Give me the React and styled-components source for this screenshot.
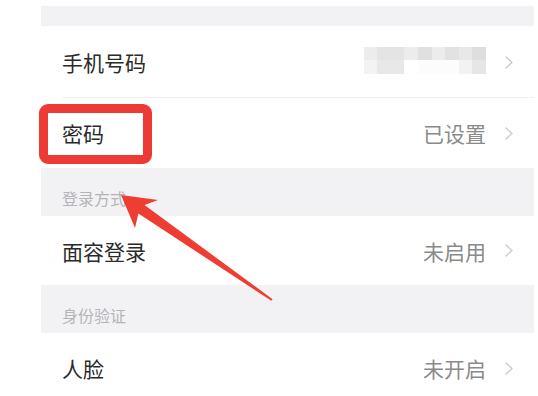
import React from "react";
import styled, { createGlobalStyle } from "styled-components";

const GlobalStyle = createGlobalStyle`
  html, body {
    margin: 0;
    padding: 0;
    background: #ffffff;
  }
  body {
    font-family: "Noto Sans CJK SC", "Noto Sans", sans-serif;
  }
`;

const Page = styled.div`
  position: relative;
  width: 538px;
  height: 396px;
  overflow: hidden;
  background: #ffffff;
  padding: 6px 4px 0 41px;
  box-sizing: border-box;
`;

const List = styled.div`
  display: flex;
  flex-direction: column;
`;

const TopBand = styled.div`
  height: 20px;
  background: #f2f2f5;
`;

const SectionHeader = styled.div`
  height: 48px;
  background: #f2f2f5;
  display: flex;
  align-items: flex-end;
  padding: 0 0 8px 21px;
  box-sizing: border-box;
  font-size: 16px;
  line-height: 20px;
  color: #b4b4b8;
`;

const Row = styled.div`
  position: relative;
  height: ${(p) => p.$h}px;
  display: flex;
  align-items: center;
  padding: 0 21px;
  box-sizing: border-box;
  background: #ffffff;

  ${(p) =>
    p.$divider &&
    `
    &::after {
      content: "";
      position: absolute;
      left: 21px;
      right: 0;
      bottom: 0;
      height: 1px;
      background: #f0f0f2;
    }
  `}
`;

const Label = styled.span`
  flex: 1;
  font-size: 21px;
  line-height: 28px;
  color: #2a2a2a;
`;

const Value = styled.span`
  font-size: 21px;
  line-height: 28px;
  color: #8a8a8a;
`;

const Chevron = styled.svg`
  width: 8px;
  height: 13px;
  margin-left: 19px;
  flex-shrink: 0;
`;

const Mosaic = styled.div`
  display: grid;
  grid-template-columns: repeat(9, 13.6px);
  grid-template-rows: repeat(2, 13.5px);
  margin-top: -4px;
`;

const Tile = styled.div`
  background: ${(p) => p.$c};
`;

const Highlight = styled.div`
  position: absolute;
  left: -2px;
  top: 6px;
  width: 113px;
  height: 60px;
  border: 9px solid #ee3a35;
  border-radius: 9px;
  box-sizing: border-box;
  pointer-events: none;
`;

const ArrowLayer = styled.svg`
  position: absolute;
  left: 0;
  top: 0;
  width: 538px;
  height: 396px;
  pointer-events: none;
`;

const mosaic = [
  "#ececec", "#e4e4e4", "#e4e4e4", "#ececec", "#e0e0e0", "#ececec", "#e2e2e2", "#e8e8e8", "#dedede",
  "#f3f3f3", "#e8e8e8", "#e8e8e8", "#ffffff", "#fcfcfc", "#fcfcfc", "#fcfcfc", "#f2f2f2", "#e6e6e6",
];

function Arrow() {
  return (
    <Chevron viewBox="0 0 8 13">
      <path
        d="M1 1 L7 6.5 L1 12"
        fill="none"
        stroke="#c9c9cc"
        strokeWidth="1.3"
        strokeLinecap="round"
        strokeLinejoin="round"
      />
    </Chevron>
  );
}

export default function App() {
  return (
    <>
      <GlobalStyle />
      <Page>
        <List>
          <TopBand />
          <Row $h={72} $divider>
            <Label>手机号码</Label>
            <Mosaic>
              {mosaic.map((c, i) => (
                <Tile key={i} $c={c} />
              ))}
            </Mosaic>
            <Arrow />
          </Row>
          <Row $h={70}>
            <Label>密码</Label>
            <Value>已设置</Value>
            <Arrow />
            <Highlight />
          </Row>
          <SectionHeader>登录方式</SectionHeader>
          <Row $h={69}>
            <Label>面容登录</Label>
            <Value>未启用</Value>
            <Arrow />
          </Row>
          <SectionHeader>身份验证</SectionHeader>
          <Row $h={70}>
            <Label>人脸</Label>
            <Value>未开启</Value>
            <Arrow />
          </Row>
        </List>
        <ArrowLayer viewBox="0 0 538 396">
          <polygon
            points="121,195 158,200 144.5,205 272.6,299.2 271.4,300.8 138.4,213.6 135,228"
            fill="#ee3d33"
            strokeLinejoin="round"
          />
        </ArrowLayer>
      </Page>
    </>
  );
}
